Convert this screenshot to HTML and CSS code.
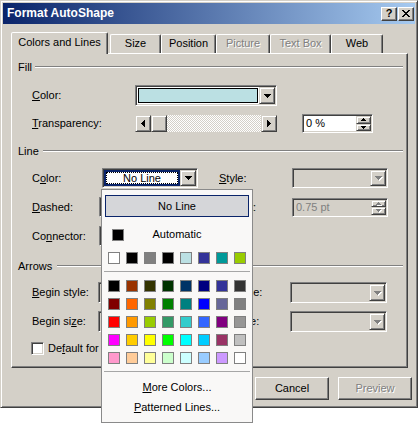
FILE: index.html
```html
<!DOCTYPE html>
<html>
<head>
<meta charset="utf-8">
<title>Format AutoShape</title>
<link rel="stylesheet" href="styles.css">
</head>
<body>
<div class="window">
  <div class="titlebar">
    <span class="title">Format AutoShape</span>
    <div class="cap-btns">
      <div class="cap-btn">?</div>
      <div class="cap-btn"><svg width="8" height="7" viewBox="0 0 8 7" shape-rendering="crispEdges"><path d="M0 0h2v1h-2z M6 0h2v1h-2z M1 1h2v1h-2z M5 1h2v1h-2z M2 2h4v1h-4z M3 3h2v1h-2z M2 4h4v1h-4z M1 5h2v1h-2z M5 5h2v1h-2z M0 6h2v1h-2z M6 6h2v1h-2z"/></svg></div>
    </div>
  </div>

  <div class="tabs">
    <div class="tab active t1">Colors and Lines</div>
    <div class="tab t2">Size</div>
    <div class="tab t3">Position</div>
    <div class="tab disabled t4">Picture</div>
    <div class="tab disabled t5">Text Box</div>
    <div class="tab t6">Web</div>
  </div>

  <div class="panel">
    <div class="ghead g-fill"><span>Fill</span><div class="etch"></div></div>

    <div class="row r-fillcolor">
      <span class="lbl w103"><u>C</u>olor:</span>
      <div class="combo w142 h21">
        <div class="field fill-field"><div class="fill-swatch"></div></div>
        <div class="dd-btn"><svg width="7" height="4" viewBox="0 0 7 4" shape-rendering="crispEdges"><path d="M0 0h7v1h-1v1h-1v1h-1v1h-1v-1h-1v-1h-1v-1h-1z"/></svg></div>
      </div>
    </div>

    <div class="row r-transp">
      <span class="lbl w103"><u>T</u>ransparency:</span>
      <div class="scrollbar">
        <div class="sb-btn"><svg width="4" height="7" viewBox="0 0 4 7" shape-rendering="crispEdges"><path d="M3 0h1v7h-1v-1h-1v-1h-1v-1h-1v-1h1v-1h1v-1h1z"/></svg></div>
        <div class="sb-thumb"></div>
        <div class="sb-track"></div>
        <div class="sb-btn"><svg width="4" height="7" viewBox="0 0 4 7" shape-rendering="crispEdges"><path d="M0 0h1v1h1v1h1v1h1v1h-1v1h-1v1h-1v1h-1z"/></svg></div>
      </div>
      <div class="spin transp-spin">
        <div class="spin-text">0 %</div>
        <div class="spin-btns">
          <div class="spin-btn"><svg width="5" height="3" viewBox="0 0 5 3" shape-rendering="crispEdges"><path d="M2 0h1v1h1v1h1v1h-5v-1h1v-1h1z"/></svg></div>
          <div class="spin-btn"><svg width="5" height="3" viewBox="0 0 5 3" shape-rendering="crispEdges"><path d="M0 0h5v1h-1v1h-1v1h-1v-1h-1v-1h-1z"/></svg></div>
        </div>
      </div>
    </div>

    <div class="ghead g-line"><span>Line</span><div class="etch"></div></div>

    <div class="row r-linecolor">
      <span class="lbl w70">C<u>o</u>lor:</span>
      <div class="combo w96 h20">
        <div class="field nl-field"><div class="nl-focus">No Line</div></div>
        <div class="dd-btn"><svg width="7" height="4" viewBox="0 0 7 4" shape-rendering="crispEdges"><path d="M0 0h7v1h-1v1h-1v1h-1v1h-1v-1h-1v-1h-1v-1h-1z"/></svg></div>
      </div>
      <span class="lbl w73 ml21"><u>S</u>tyle:</span>
      <div class="combo w96 h20 disabled">
        <div class="field"></div>
        <div class="dd-btn"><svg class="gray-arrow" width="7" height="4" viewBox="0 0 7 4" shape-rendering="crispEdges"><path d="M0 0h7v1h-1v1h-1v1h-1v1h-1v-1h-1v-1h-1v-1h-1z"/></svg></div>
      </div>
    </div>

    <div class="row r-dashed">
      <span class="lbl w67"><u>D</u>ashed:</span>
      <div class="combo w96 h20">
        <div class="field"></div>
        <div class="dd-btn"><svg width="7" height="4" viewBox="0 0 7 4" shape-rendering="crispEdges"><path d="M0 0h7v1h-1v1h-1v1h-1v1h-1v-1h-1v-1h-1v-1h-1z"/></svg></div>
      </div>
      <span class="lbl w73 ml24"><u>W</u>eight:</span>
      <div class="spin weight-spin disabled">
        <div class="spin-text">0.75 pt</div>
        <div class="spin-btns">
          <div class="spin-btn"><svg class="gray-arrow" width="5" height="3" viewBox="0 0 5 3" shape-rendering="crispEdges"><path d="M2 0h1v1h1v1h1v1h-5v-1h1v-1h1z"/></svg></div>
          <div class="spin-btn"><svg class="gray-arrow" width="5" height="3" viewBox="0 0 5 3" shape-rendering="crispEdges"><path d="M0 0h5v1h-1v1h-1v1h-1v-1h-1v-1h-1z"/></svg></div>
        </div>
      </div>
    </div>

    <div class="row r-connector">
      <span class="lbl w67">Co<u>n</u>nector:</span>
      <div class="combo w96 h20 disabled">
        <div class="field"></div>
        <div class="dd-btn"><svg class="gray-arrow" width="7" height="4" viewBox="0 0 7 4" shape-rendering="crispEdges"><path d="M0 0h7v1h-1v1h-1v1h-1v1h-1v-1h-1v-1h-1v-1h-1z"/></svg></div>
      </div>
    </div>

    <div class="ghead g-arrows"><span>Arrows</span><div class="etch"></div></div>

    <div class="row r-bstyle">
      <span class="lbl w66"><u>B</u>egin style:</span>
      <div class="combo w97 h21 disabled">
        <div class="field"></div>
        <div class="dd-btn"><svg class="gray-arrow" width="7" height="4" viewBox="0 0 7 4" shape-rendering="crispEdges"><path d="M0 0h7v1h-1v1h-1v1h-1v1h-1v-1h-1v-1h-1v-1h-1z"/></svg></div>
      </div>
      <span class="lbl w76 ml19"><u>E</u>nd style:</span>
      <div class="combo w97 h21 disabled">
        <div class="field"></div>
        <div class="dd-btn"><svg class="gray-arrow" width="7" height="4" viewBox="0 0 7 4" shape-rendering="crispEdges"><path d="M0 0h7v1h-1v1h-1v1h-1v1h-1v-1h-1v-1h-1v-1h-1z"/></svg></div>
      </div>
    </div>

    <div class="row r-bsize">
      <span class="lbl w66">Begin si<u>z</u>e:</span>
      <div class="combo w97 h21 disabled">
        <div class="field"></div>
        <div class="dd-btn"><svg class="gray-arrow" width="7" height="4" viewBox="0 0 7 4" shape-rendering="crispEdges"><path d="M0 0h7v1h-1v1h-1v1h-1v1h-1v-1h-1v-1h-1v-1h-1z"/></svg></div>
      </div>
      <span class="lbl w76 ml19">End s<u>i</u>ze:</span>
      <div class="combo w97 h21 disabled">
        <div class="field"></div>
        <div class="dd-btn"><svg class="gray-arrow" width="7" height="4" viewBox="0 0 7 4" shape-rendering="crispEdges"><path d="M0 0h7v1h-1v1h-1v1h-1v1h-1v-1h-1v-1h-1v-1h-1z"/></svg></div>
      </div>
    </div>

    <div class="row r-check">
      <div class="checkbox"></div>
      <span class="check-lbl">De<u>f</u>ault for new objects</span>
    </div>
  </div>

  <div class="buttons">
    <div class="btn btn-hidden">OK</div>
    <div class="btn">Cancel</div>
    <div class="btn disabled">Preview</div>
  </div>

  <div class="popup">
    <div class="noline">No Line</div>
    <div class="auto"><div class="sw" style="background:#000000"></div><span>Automatic</span><i></i></div>
    <div class="recent">
      <div class="sw" style="background:#ffffff"></div>
      <div class="sw" style="background:#000000"></div>
      <div class="sw" style="background:#808080"></div>
      <div class="sw" style="background:#000000"></div>
      <div class="sw" style="background:#bbe0e3"></div>
      <div class="sw" style="background:#333399"></div>
      <div class="sw" style="background:#009999"></div>
      <div class="sw" style="background:#99cc00"></div>
    </div>
    <div class="sep"></div>
    <div class="palette">
      <div class="sw" style="background:#000000"></div>
      <div class="sw" style="background:#993300"></div>
      <div class="sw" style="background:#333300"></div>
      <div class="sw" style="background:#003300"></div>
      <div class="sw" style="background:#003366"></div>
      <div class="sw" style="background:#000080"></div>
      <div class="sw" style="background:#333399"></div>
      <div class="sw" style="background:#333333"></div>
      <div class="sw" style="background:#800000"></div>
      <div class="sw" style="background:#ff6600"></div>
      <div class="sw" style="background:#808000"></div>
      <div class="sw" style="background:#008000"></div>
      <div class="sw" style="background:#008080"></div>
      <div class="sw" style="background:#0000ff"></div>
      <div class="sw" style="background:#666699"></div>
      <div class="sw" style="background:#808080"></div>
      <div class="sw" style="background:#ff0000"></div>
      <div class="sw" style="background:#ff9900"></div>
      <div class="sw" style="background:#99cc00"></div>
      <div class="sw" style="background:#339966"></div>
      <div class="sw" style="background:#33cccc"></div>
      <div class="sw" style="background:#3366ff"></div>
      <div class="sw" style="background:#800080"></div>
      <div class="sw" style="background:#969696"></div>
      <div class="sw" style="background:#ff00ff"></div>
      <div class="sw" style="background:#ffcc00"></div>
      <div class="sw" style="background:#ffff00"></div>
      <div class="sw" style="background:#00ff00"></div>
      <div class="sw" style="background:#00ffff"></div>
      <div class="sw" style="background:#00ccff"></div>
      <div class="sw" style="background:#993366"></div>
      <div class="sw" style="background:#c0c0c0"></div>
      <div class="sw" style="background:#ff99cc"></div>
      <div class="sw" style="background:#ffcc99"></div>
      <div class="sw" style="background:#ffff99"></div>
      <div class="sw" style="background:#ccffcc"></div>
      <div class="sw" style="background:#ccffff"></div>
      <div class="sw" style="background:#99ccff"></div>
      <div class="sw" style="background:#cc99ff"></div>
      <div class="sw" style="background:#ffffff"></div>
    </div>
    <div class="sep"></div>
    <div class="menu-item first"><span><u>M</u>ore Colors...</span></div>
    <div class="menu-item"><span><u>P</u>atterned Lines...</span></div>
  </div>
</div>
</body>
</html>
```

FILE: styles.css
```css
* { box-sizing: border-box; }
html, body { margin: 0; padding: 0; background: #fff; }
html, body { min-height: 426px; }
body {
  font-family: "Liberation Sans", Arial, sans-serif;
  font-size: 11px;
  line-height: 13px;
  color: #000;
}
u { text-decoration: underline; text-underline-offset: 1px; }
svg { display: block; }

.window {
  position: relative;
  width: 418px;
  height: 408px;
  background: #d4d0c8;
  border: 1px solid;
  border-color: #d4d0c8 #404040 #404040 #d4d0c8;
  box-shadow: inset 1px 1px #fff, inset -1px -1px #808080;
  padding: 2px;
}

/* title bar */
.titlebar {
  height: 21px;
  display: flex;
  align-items: center;
  padding: 0 1px 0 4px;
  background: linear-gradient(to right, #0a246a, #a6caf0);
  color: #fff;
  font-weight: bold;
}
.title { font-size: 12px; }
.cap-btns { margin-left: auto; display: flex; gap: 1px; }
.cap-btn {
  width: 16px;
  height: 14px;
  background: #d4d0c8;
  color: #000;
  border: 1px solid;
  border-color: #fff #404040 #404040 #fff;
  box-shadow: inset -1px -1px #808080;
  display: flex;
  align-items: center;
  justify-content: center;
  font-size: 11px;
  font-weight: bold;
  line-height: 1;
}

/* tabs */
.tabs {
  display: flex;
  align-items: flex-end;
  height: 21px;
  margin-top: 8px;
  padding-left: 8px;
}
.tab {
  height: 19px;
  display: flex;
  align-items: center;
  justify-content: center;
  border: 1px solid;
  border-bottom: 0;
  border-color: #fff #404040 transparent #fff;
  box-shadow: inset -1px 0 #808080;
  border-radius: 2px 2px 0 0;
  padding-bottom: 1px;
}
.tab.active {
  height: 22px;
  margin-bottom: -1px;
  position: relative;
  z-index: 1;
  background: #d4d0c8;
  padding-bottom: 3px;
}
.tab.disabled { color: #808080; text-shadow: 1px 1px #fff; }
.t1 { width: 97px; }
.t2 { width: 51px; margin-left: 2px; }
.t3 { width: 55px; }
.t4 { width: 54px; }
.t5 { width: 61px; }
.t6 { width: 52px; }

/* panel */
.panel {
  margin-left: 8px;
  width: 397px;
  height: 315px;
  border: 1px solid;
  border-color: #fff #404040 #404040 #fff;
  box-shadow: inset -1px -1px #808080;
  display: flex;
  flex-direction: column;
}
.ghead {
  display: flex;
  align-items: center;
  height: 14px;
  padding-left: 6px;
  padding-right: 4px;
}
.ghead .etch {
  flex: 1;
  height: 2px;
  margin-left: 4px;
  border-top: 1px solid #808080;
  border-bottom: 1px solid #fff;
}
.g-fill { margin-top: 6px; }
.g-fill .etch { margin-left: 3px; }
.g-line { margin-top: 11px; }
.g-arrows { margin-top: 13px; }
.g-arrows .etch { margin-left: 5px; }

.row { display: flex; align-items: center; padding-left: 20px; }
.r-fillcolor { margin-top: 11px; height: 21px; }
.r-transp { margin-top: 8px; height: 19px; }
.r-linecolor { margin-top: 10px; height: 20px; }
.r-dashed { margin-top: 9px; height: 20px; }
.r-connector { margin-top: 9px; height: 20px; }
.r-bstyle { margin-top: 9px; height: 21px; }
.r-bsize { margin-top: 8px; height: 21px; }
.r-check { margin-top: 10px; height: 13px; padding-left: 19px; }

.lbl { flex: none; white-space: nowrap; }
.w103 { width: 103px; }
.w70 { width: 70px; }
.w67 { width: 67px; }
.w66 { width: 66px; }
.w73 { width: 73px; }
.w76 { width: 76px; }
.ml21 { margin-left: 21px; }
.ml24 { margin-left: 24px; }
.ml19 { margin-left: 19px; }

/* combo boxes */
.combo {
  flex: none;
  display: flex;
  border: 1px solid;
  border-color: #808080 #fff #fff #808080;
  box-shadow: inset 1px 1px #404040, inset -1px -1px #d4d0c8;
  padding: 1px;
  background: #fff;
}
.combo.disabled { background: #d4d0c8; }
.w142 { width: 142px; }
.w96 { width: 96px; }
.w97 { width: 97px; }
.h21 { height: 21px; }
.h20 { height: 20px; }
.field { flex: 1; }
.dd-btn {
  width: 16px;
  flex: none;
  background: #d4d0c8;
  border: 1px solid;
  border-color: #d4d0c8 #404040 #404040 #d4d0c8;
  box-shadow: inset 1px 1px #fff, inset -1px -1px #808080;
  display: flex;
  align-items: center;
  justify-content: center;
}
.gray-arrow { fill: #808080; filter: drop-shadow(1px 1px 0 #fff); }
.fill-field { padding: 1px; display: flex; }
.fill-swatch { flex: 1; border: 1px solid #000; background: #bbe0e3; }
.nl-field { background: #0a246a; padding: 2px; display: flex; }
.nl-focus {
  flex: 1;
  background: #fff;
  border: 1px dotted #000;
  display: flex;
  align-items: center;
  justify-content: center;
  line-height: 11px;
}

/* scrollbar */
.scrollbar { flex: none; width: 142px; height: 17px; display: flex; }
.sb-btn, .sb-thumb {
  width: 16px;
  flex: none;
  background: #d4d0c8;
  border: 1px solid;
  border-color: #d4d0c8 #404040 #404040 #d4d0c8;
  box-shadow: inset 1px 1px #fff, inset -1px -1px #808080;
  display: flex;
  align-items: center;
  justify-content: center;
}
.sb-track {
  flex: 1;
  background: repeating-conic-gradient(#fff 0 25%, #d4d0c8 0 50%) 0 0 / 2px 2px;
}

/* spinners */
.spin {
  flex: none;
  display: flex;
  height: 19px;
  border: 1px solid;
  border-color: #808080 #fff #fff #808080;
  box-shadow: inset 1px 1px #404040, inset -1px -1px #d4d0c8;
  padding: 1px;
  background: #fff;
}
.spin.disabled { background: #d4d0c8; color: #808080; }
.transp-spin { width: 71px; margin-left: 25px; }
.weight-spin { width: 96px; }
.spin-text { flex: 1; padding-left: 2px; display: flex; align-items: center; }
.spin-btns { width: 15px; flex: none; display: flex; flex-direction: column; }
.spin-btn {
  flex: 1;
  background: #d4d0c8;
  border: 1px solid;
  border-color: #d4d0c8 #404040 #404040 #d4d0c8;
  box-shadow: inset 1px 1px #fff, inset -1px -1px #808080;
  display: flex;
  align-items: center;
  justify-content: center;
}

/* checkbox */
.checkbox {
  width: 13px;
  height: 13px;
  flex: none;
  background: #fff;
  border: 1px solid;
  border-color: #808080 #fff #fff #808080;
  box-shadow: inset 1px 1px #404040, inset -1px -1px #d4d0c8;
}
.check-lbl { margin-left: 4px; white-space: nowrap; }

/* dialog buttons */
.buttons {
  margin-top: 9px;
  display: flex;
  justify-content: flex-end;
  gap: 9px;
  padding-right: 3px;
}
.btn {
  width: 74px;
  height: 23px;
  display: flex;
  align-items: center;
  justify-content: center;
  border: 1px solid;
  border-color: #fff #404040 #404040 #fff;
  box-shadow: inset -1px -1px #808080;
}
.btn-hidden { visibility: hidden; }
.btn.disabled { color: #808080; text-shadow: 1px 1px #fff; }

/* colour popup */
.popup {
  position: absolute;
  left: 100px;
  top: 188px;
  width: 152px;
  height: 234px;
  background: #f9f8f7;
  border: 1px solid #8a8a8a;
  display: flex;
  flex-direction: column;
  z-index: 5;
}
.noline {
  margin: 5px 3px 0;
  height: 22px;
  flex: none;
  background: #d5d6d9;
  border: 1px solid #0a246a;
  display: flex;
  align-items: center;
  justify-content: center;
}
.auto {
  margin-top: 11px;
  height: 12px;
  flex: none;
  display: grid;
  grid-template-columns: 34px 1fr 34px;
  align-items: center;
}
.auto .sw { margin-left: 10px; }
.auto span { text-align: center; }
.sw { width: 12px; height: 12px; border: 1px solid #808080; }
.recent { margin-top: 12px; flex: none; display: flex; gap: 6px; padding-left: 6px; }
.sep { margin: 7px 2px 0; height: 1px; flex: none; background: #a6a6a6; }
.palette {
  margin-top: 8px;
  flex: none;
  display: grid;
  grid-template-columns: repeat(8, 12px);
  grid-auto-rows: 12px;
  gap: 6px;
  padding-left: 6px;
}
.menu-item { height: 20px; flex: none; display: flex; align-items: center; justify-content: center; }
.menu-item.first { margin-top: 5px; }
```
